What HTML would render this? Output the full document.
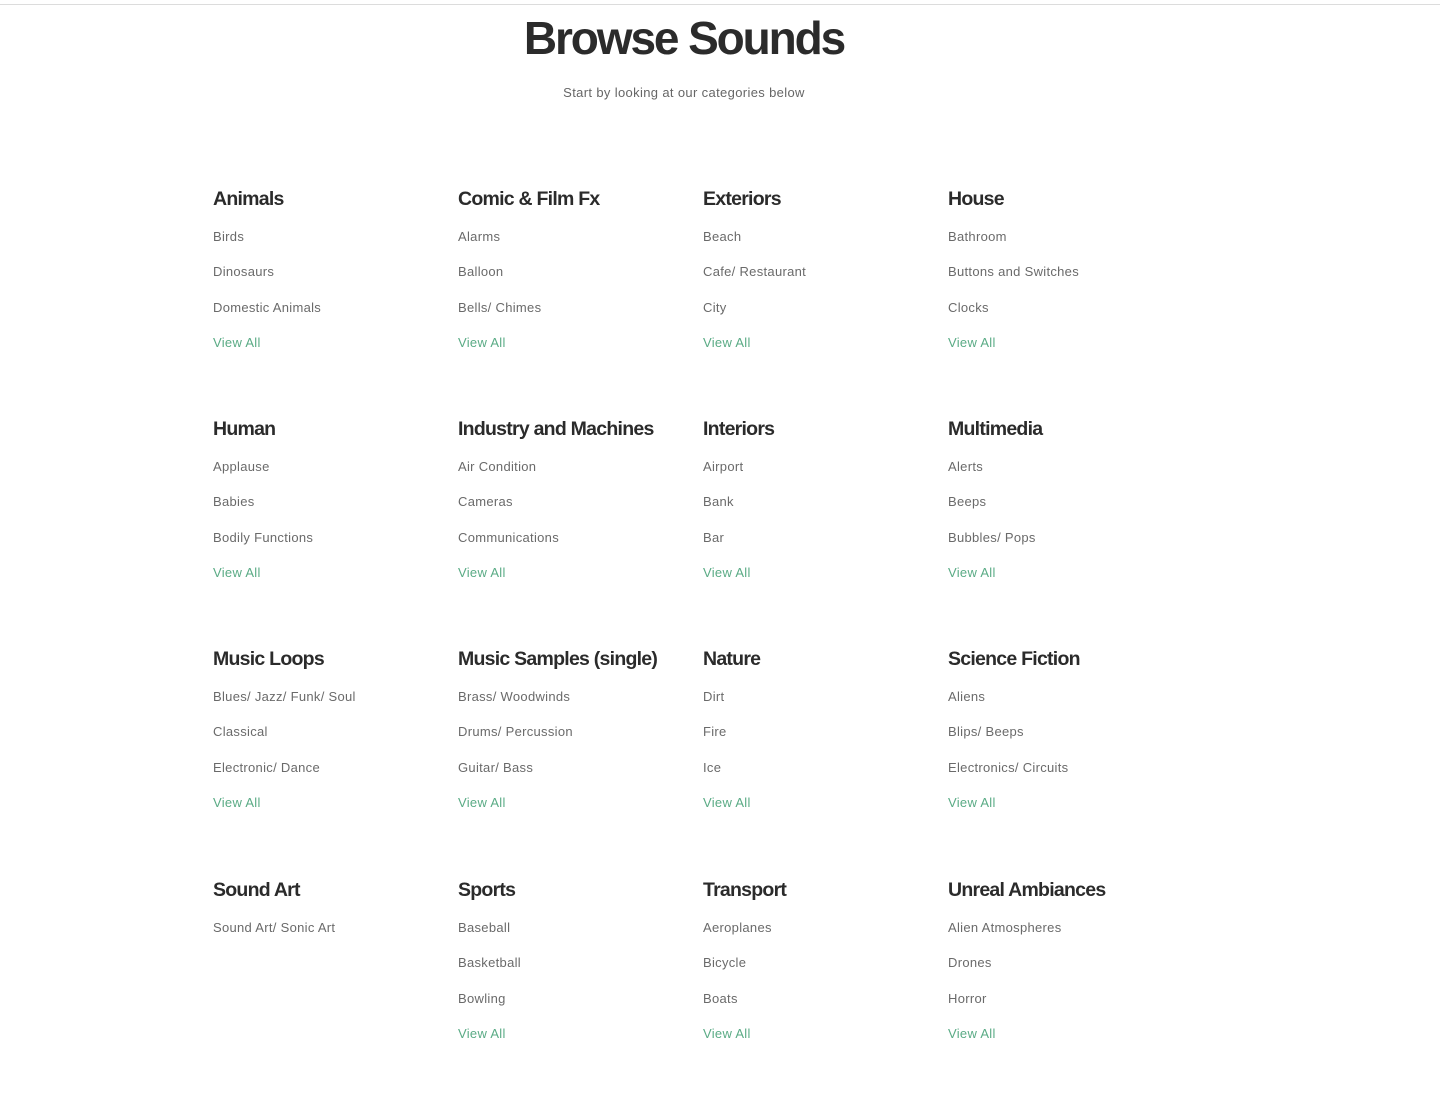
<!DOCTYPE html>
<html><head><meta charset="utf-8"><style>
*{margin:0;padding:0;box-sizing:border-box}
html,body{width:1440px;height:1101px;background:#fff;overflow:hidden;font-family:"Liberation Sans",sans-serif}
.bar{position:absolute;left:0;top:4px;width:1440px;height:1px;background:#dcdcdc}
h1{position:absolute;left:0;width:1368px;text-align:center;top:11px;font-size:46px;line-height:54px;font-weight:700;color:#2b2b2b;letter-spacing:-2.1px}
.sub{position:absolute;left:0;width:1368px;text-align:center;top:85px;font-size:13px;line-height:16px;color:#666;letter-spacing:0.35px}
.cat{position:absolute;width:240px}
.cat h2{font-size:19.5px;line-height:24px;font-weight:700;color:#2b2b2b;letter-spacing:-0.75px;height:42px}
.cat a{display:block;font-size:13px;line-height:16px;height:35.3px;color:#6a6a6a;text-decoration:none;letter-spacing:0.3px}
.cat a.v{color:#5aab85}
</style></head><body>
<div class="bar"></div>
<h1>Browse Sounds</h1>
<div class="sub">Start by looking at our categories below</div>

<div class="cat" style="left:213px;top:187px"><h2>Animals</h2><a>Birds</a><a>Dinosaurs</a><a>Domestic Animals</a><a class="v">View All</a></div>
<div class="cat" style="left:458px;top:187px"><h2>Comic &amp; Film Fx</h2><a>Alarms</a><a>Balloon</a><a>Bells/ Chimes</a><a class="v">View All</a></div>
<div class="cat" style="left:703px;top:187px"><h2>Exteriors</h2><a>Beach</a><a>Cafe/ Restaurant</a><a>City</a><a class="v">View All</a></div>
<div class="cat" style="left:948px;top:187px"><h2>House</h2><a>Bathroom</a><a>Buttons and Switches</a><a>Clocks</a><a class="v">View All</a></div>

<div class="cat" style="left:213px;top:417px"><h2>Human</h2><a>Applause</a><a>Babies</a><a>Bodily Functions</a><a class="v">View All</a></div>
<div class="cat" style="left:458px;top:417px"><h2>Industry and Machines</h2><a>Air Condition</a><a>Cameras</a><a>Communications</a><a class="v">View All</a></div>
<div class="cat" style="left:703px;top:417px"><h2>Interiors</h2><a>Airport</a><a>Bank</a><a>Bar</a><a class="v">View All</a></div>
<div class="cat" style="left:948px;top:417px"><h2>Multimedia</h2><a>Alerts</a><a>Beeps</a><a>Bubbles/ Pops</a><a class="v">View All</a></div>

<div class="cat" style="left:213px;top:647px"><h2>Music Loops</h2><a>Blues/ Jazz/ Funk/ Soul</a><a>Classical</a><a>Electronic/ Dance</a><a class="v">View All</a></div>
<div class="cat" style="left:458px;top:647px"><h2>Music Samples (single)</h2><a>Brass/ Woodwinds</a><a>Drums/ Percussion</a><a>Guitar/ Bass</a><a class="v">View All</a></div>
<div class="cat" style="left:703px;top:647px"><h2>Nature</h2><a>Dirt</a><a>Fire</a><a>Ice</a><a class="v">View All</a></div>
<div class="cat" style="left:948px;top:647px"><h2>Science Fiction</h2><a>Aliens</a><a>Blips/ Beeps</a><a>Electronics/ Circuits</a><a class="v">View All</a></div>

<div class="cat" style="left:213px;top:878px"><h2>Sound Art</h2><a>Sound Art/ Sonic Art</a></div>
<div class="cat" style="left:458px;top:878px"><h2>Sports</h2><a>Baseball</a><a>Basketball</a><a>Bowling</a><a class="v">View All</a></div>
<div class="cat" style="left:703px;top:878px"><h2>Transport</h2><a>Aeroplanes</a><a>Bicycle</a><a>Boats</a><a class="v">View All</a></div>
<div class="cat" style="left:948px;top:878px"><h2>Unreal Ambiances</h2><a>Alien Atmospheres</a><a>Drones</a><a>Horror</a><a class="v">View All</a></div>
</body></html>
